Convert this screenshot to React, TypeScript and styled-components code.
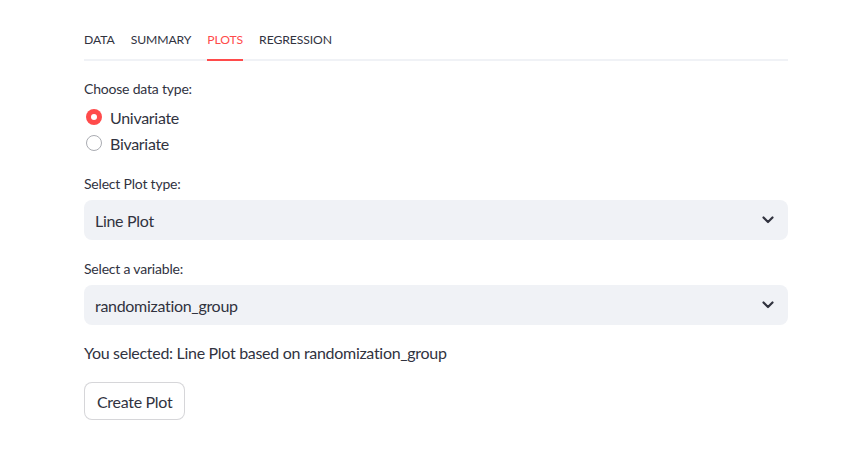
import React from "react";
import styled, { createGlobalStyle } from "styled-components";

const Global = createGlobalStyle`
  html, body { margin: 0; padding: 0; background: #fff; }
  body { font-family: "Source Sans Pro", Lato, "Noto Sans", sans-serif; color: rgb(49, 51, 63); }
  * { box-sizing: border-box; }
`;

const Page = styled.div`
  width: 847px;
  height: 476px;
  padding: 23px 59px 0 84px;
  display: flex;
  flex-direction: column;
`;

const TabBar = styled.div`
  display: flex;
  gap: 16px;
  border-bottom: 2px solid rgb(240, 242, 246);
  height: 38px;
`;

const Tab = styled.div<{ $active?: boolean }>`
  font-size: 12.2px;
  letter-spacing: -0.1px;
  height: 38px;
  display: flex;
  align-items: center;
  padding-bottom: 4px;
  color: ${(p) => (p.$active ? "#ff4b4b" : "rgb(49, 51, 63)")};
  border-bottom: 2px solid ${(p) => (p.$active ? "#ff4b4b" : "transparent")};
  margin-bottom: -2px;
`;

const Label = styled.div<{ $mb?: number }>`
  font-size: 14px;
  line-height: 20px;
  letter-spacing: -0.2px;
  margin-bottom: ${(p) => p.$mb ?? 6}px;
`;

const Group = styled.div<{ $mt: number }>`
  margin-top: ${(p) => p.$mt}px;
  display: flex;
  flex-direction: column;
`;

const RadioRow = styled.div`
  display: flex;
  align-items: center;
  gap: 8px;
  height: 26px;
  font-size: 16px;
  letter-spacing: -0.3px;
`;

const RadioDot = styled.span<{ $on?: boolean }>`
  width: 16px;
  height: 16px;
  border-radius: 50%;
  flex: none;
  margin-left: 2px;
  position: relative;
  ${(p) =>
    p.$on
      ? `background: #ff4b4b;`
      : `border: 1px solid rgb(170, 172, 178); background: #fff;`}
  &::after {
    content: "";
    display: ${(p) => (p.$on ? "block" : "none")};
    position: absolute;
    left: 5px;
    top: 5px;
    width: 6px;
    height: 6px;
    border-radius: 50%;
    background: #fff;
  }
`;

const Select = styled.div`
  height: 40px;
  border-radius: 8px;
  background: rgb(240, 242, 246);
  display: flex;
  align-items: center;
  justify-content: space-between;
  padding: 0 14px 0 11px;
  font-size: 16px;
  letter-spacing: -0.3px;
`;

const Text = styled.div`
  font-size: 16px;
  line-height: 24px;
  letter-spacing: -0.3px;
`;

const Button = styled.button`
  align-self: flex-start;
  height: 38px;
  padding: 0 12px;
  border-radius: 8px;
  border: 1px solid rgba(49, 51, 63, 0.2);
  background: #fff;
  font-family: inherit;
  font-size: 16px;
  letter-spacing: -0.3px;
  color: rgb(49, 51, 63);
`;

const Chevron = () => (
  <svg width="12" height="8" viewBox="0 0 12 8">
    <path d="M1.5 1.5 L6 6 L10.5 1.5" fill="none" stroke="rgb(49,51,63)" strokeWidth="2.2" strokeLinecap="round" strokeLinejoin="round" />
  </svg>
);

export default function App() {
  return (
    <>
      <Global />
      <Page>
        <TabBar>
          <Tab>DATA</Tab>
          <Tab>SUMMARY</Tab>
          <Tab $active>PLOTS</Tab>
          <Tab>REGRESSION</Tab>
        </TabBar>
        <Group $mt={18}>
          <Label $mb={5}>Choose data type:</Label>
          <RadioRow><RadioDot $on />Univariate</RadioRow>
          <RadioRow><RadioDot />Bivariate</RadioRow>
        </Group>
        <Group $mt={18}>
          <Label>Select Plot type:</Label>
          <Select>Line Plot<Chevron /></Select>
        </Group>
        <Group $mt={19}>
          <Label>Select a variable:</Label>
          <Select>randomization_group<Chevron /></Select>
        </Group>
        <Group $mt={16}>
          <Text>You selected: Line Plot based on randomization_group</Text>
        </Group>
        <Group $mt={17}>
          <Button>Create Plot</Button>
        </Group>
      </Page>
    </>
  );
}
